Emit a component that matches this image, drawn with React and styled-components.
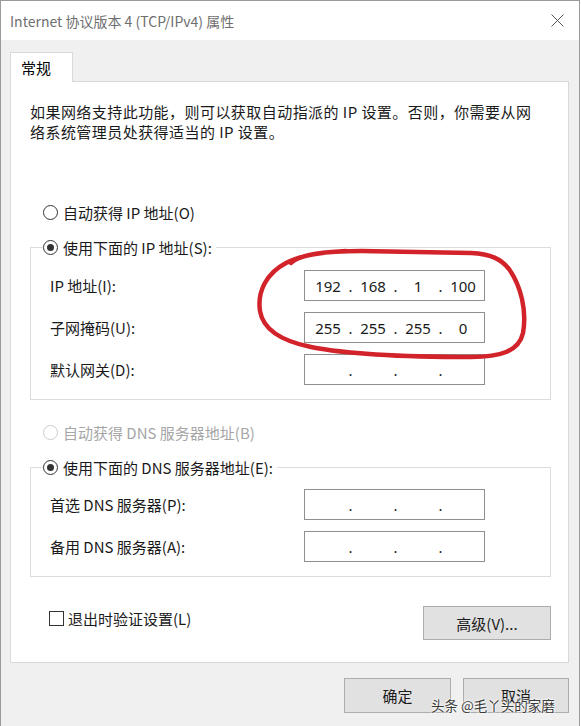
import React from 'react';
import styled, { createGlobalStyle } from 'styled-components';

const GlobalStyle = createGlobalStyle`
  html, body {
    margin: 0;
    padding: 0;
    background: #fff;
  }
  body {
    font-family: "Noto Sans CJK SC", "Noto Sans", sans-serif;
    font-size: 15px;
    color: #1a1a1a;
  }
`;

const Window = styled.div`
  position: relative;
  width: 580px;
  height: 726px;
  box-sizing: border-box;
  border: 1px solid #9a9a9a;
  border-bottom: none;
  background: #f0f0f0;
  display: flex;
  flex-direction: column;
  overflow: hidden;
`;

const TitleBar = styled.div`
  height: 39px;
  flex-shrink: 0;
  background: #fff;
  display: flex;
  align-items: center;
  justify-content: space-between;
  padding: 0 15px 0 9px;
  font-size: 14px;
  color: #6f6f6f;
`;

const CloseIcon = () => (
  <svg width="13" height="13" viewBox="0 0 13 13">
    <path d="M0.5 0.5 L12.5 12.5 M12.5 0.5 L0.5 12.5" stroke="#555" strokeWidth="1" fill="none" />
  </svg>
);

const Body = styled.div`
  flex: 1;
  display: flex;
  flex-direction: column;
  padding: 12px 10px 0 9px;
`;

const TabStrip = styled.div`
  display: flex;
`;

const Tab = styled.div`
  position: relative;
  z-index: 1;
  width: 63px;
  height: 30px;
  margin-bottom: -1px;
  background: #fff;
  border: 1px solid #d9d9d9;
  border-bottom: none;
  display: flex;
  align-items: center;
  padding-left: 10px;
  box-sizing: border-box;
  color: #000;
`;

const Panel = styled.div`
  background: #fff;
  border: 1px solid #d9d9d9;
  padding: 20px 17px 22px 19px;
  display: flex;
  flex-direction: column;
`;

const Desc = styled.p`
  margin: 0;
  line-height: 20px;
  letter-spacing: 0.45px;
`;

const RadioRow = styled.label`
  display: flex;
  align-items: center;
  height: 20px;
  gap: 5px;
  margin-top: ${(p) => p.$top || 0}px;
  margin-left: ${(p) => (p.$inLegend ? 0 : 13)}px;
  color: ${(p) => (p.$disabled ? '#a6a6a6' : '#1a1a1a')};
`;

const RadioCircle = styled.span`
  width: 15px;
  height: 15px;
  box-sizing: border-box;
  border-radius: 50%;
  border: 1.3px solid ${(p) => (p.$disabled ? '#cccccc' : '#333')};
  display: flex;
  align-items: center;
  justify-content: center;
  &::after {
    content: '';
    width: 7px;
    height: 7px;
    border-radius: 50%;
    background: #333;
    display: ${(p) => (p.$checked ? 'block' : 'none')};
  }
`;

const Radio = ({ checked, disabled, children, top, inLegend }) => (
  <RadioRow $disabled={disabled} $top={top} $inLegend={inLegend}>
    <RadioCircle $checked={checked} $disabled={disabled} />
    <span>{children}</span>
  </RadioRow>
);

const Group = styled.fieldset`
  margin: ${(p) => p.$top}px 0 0 0;
  padding: 0;
  border: 1px solid #dcdcdc;
  min-width: 0;
`;

const Legend = styled.legend`
  margin-left: 12px;
  padding: 0 4px 0 0;
  background: #fff;
`;

const Rows = styled.div`
  display: flex;
  flex-direction: column;
  gap: 11px;
  padding: ${(p) => p.$top}px 65px 14px 19px;
`;

const FieldRow = styled.div`
  display: flex;
  align-items: center;
  justify-content: space-between;
  height: 31px;
`;

const IpBox = styled.div`
  width: 181px;
  height: 31px;
  box-sizing: border-box;
  border: 1px solid #8f8f8f;
  background: #fff;
  display: flex;
  align-items: center;
  padding-left: 3px;
  font-family: "Noto Sans", "Noto Sans CJK SC", sans-serif;
  font-size: 15px;
  color: #1a1a1a;
`;

const Seg = styled.span`
  width: 40px;
  text-align: center;
`;

const Dot = styled.span`
  width: 5px;
  text-align: center;
`;

const IpField = ({ value = ['', '', '', ''] }) => (
  <IpBox>
    <Seg>{value[0]}</Seg>
    <Dot>.</Dot>
    <Seg>{value[1]}</Seg>
    <Dot>.</Dot>
    <Seg>{value[2]}</Seg>
    <Dot>.</Dot>
    <Seg>{value[3]}</Seg>
  </IpBox>
);

const FooterRow = styled.div`
  margin-top: 29px;
  display: flex;
  justify-content: space-between;
  align-items: flex-start;
`;

const CheckLabel = styled.label`
  display: flex;
  align-items: center;
  gap: 4px;
  margin: 2px 0 0 19px;
  height: 20px;
`;

const CheckBox = styled.span`
  width: 15px;
  height: 15px;
  box-sizing: border-box;
  border: 1.3px solid #333;
  background: #fff;
`;

const Button = styled.button`
  width: ${(p) => p.$w}px;
  height: ${(p) => p.$h}px;
  background: #e1e1e1;
  border: 1px solid #adadad;
  font-family: "Noto Sans CJK SC", "Noto Sans", sans-serif;
  font-size: 15px;
  color: #1a1a1a;
  padding: 0;
`;

const DialogButtons = styled.div`
  margin-top: 15px;
  display: flex;
  justify-content: flex-end;
  gap: 12px;
`;

const Mark = styled.svg`
  position: absolute;
  left: 0;
  top: 0;
  pointer-events: none;
`;

const Watermark = styled.div`
  position: absolute;
  left: 430px;
  top: 694px;
  font-size: 13.5px;
  color: #3a3a3a;
  text-shadow: 0 0 2px #fff, 0 0 2px #fff, 0 0 3px #fff;
  pointer-events: none;
`;

export default function App() {
  return (
    <>
      <GlobalStyle />
      <Window>
        <TitleBar>
          <span>Internet 协议版本 4 (TCP/IPv4) 属性</span>
          <CloseIcon />
        </TitleBar>
        <Body>
          <TabStrip>
            <Tab>常规</Tab>
          </TabStrip>
          <Panel>
            <Desc>
              如果网络支持此功能，则可以获取自动指派的 IP 设置。否则，你需要从网
              <br />
              络系统管理员处获得适当的 IP 设置。
            </Desc>

            <Radio top={60}>自动获得 IP 地址(O)</Radio>
            <Group $top={15}>
              <Legend>
                <Radio checked inLegend>使用下面的 IP 地址(S):</Radio>
              </Legend>
              <Rows $top={13}>
                <FieldRow>
                  <span>IP 地址(I):</span>
                  <IpField value={['192', '168', '1', '100']} />
                </FieldRow>
                <FieldRow>
                  <span>子网掩码(U):</span>
                  <IpField value={['255', '255', '255', '0']} />
                </FieldRow>
                <FieldRow>
                  <span>默认网关(D):</span>
                  <IpField />
                </FieldRow>
              </Rows>
            </Group>

            <Radio top={22} disabled>自动获得 DNS 服务器地址(B)</Radio>
            <Group $top={15}>
              <Legend>
                <Radio checked inLegend>使用下面的 DNS 服务器地址(E):</Radio>
              </Legend>
              <Rows $top={12}>
                <FieldRow>
                  <span>首选 DNS 服务器(P):</span>
                  <IpField />
                </FieldRow>
                <FieldRow>
                  <span>备用 DNS 服务器(A):</span>
                  <IpField />
                </FieldRow>
              </Rows>
            </Group>

            <FooterRow>
              <CheckLabel>
                <CheckBox />
                <span>退出时验证设置(L)</span>
              </CheckLabel>
              <Button $w={128} $h={34}>高级(V)...</Button>
            </FooterRow>
          </Panel>
          <DialogButtons>
            <Button $w={107} $h={35}>确定</Button>
            <Button $w={106} $h={35}>取消</Button>
          </DialogButtons>
        </Body>
        <Mark width="581" height="726" viewBox="0 0 581 726">
          <path
            d="M 290 262 C 300 252, 330 250, 360 250 L 470 252 C 490 253, 500 258, 508 268 C 520 285, 526 310, 522 332 C 518 350, 500 356, 470 356 C 420 356, 350 354, 310 346 C 280 340, 262 328, 259 310 C 256 290, 266 272, 285 262 C 300 254, 320 251, 345 250"
            fill="none"
            stroke="#d2232a"
            strokeWidth="4.5"
            strokeLinecap="round"
          />
        </Mark>
        <Watermark>头条 @毛丫头的家磨</Watermark>
      </Window>
    </>
  );
}
